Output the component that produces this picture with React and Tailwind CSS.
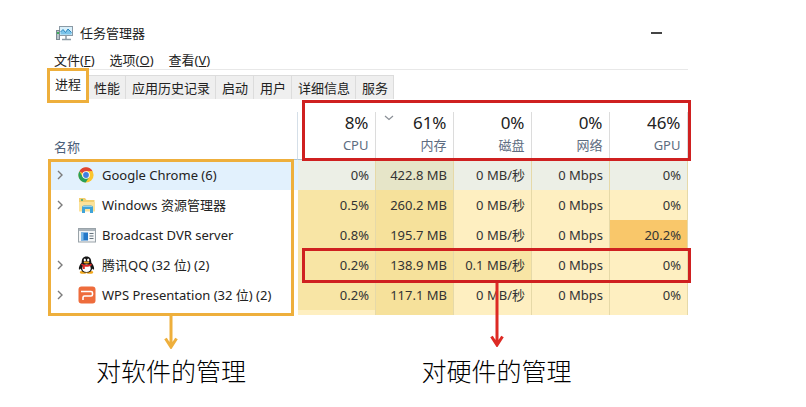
import React from "react";

const menus = [
  { label: "文件", hotkey: "F" },
  { label: "选项", hotkey: "O" },
  { label: "查看", hotkey: "V" },
];

const tabs = ["性能", "应用历史记录", "启动", "用户", "详细信息", "服务"];

const columns = [
  { label: "CPU", total: "8%" },
  { label: "内存", total: "61%", sorted: true },
  { label: "磁盘", total: "0%" },
  { label: "网络", total: "0%" },
  { label: "GPU", total: "46%" },
];

// Heat levels of the usage cells, from idle to busy
const heat = {
  hover: "bg-[#ecefe6]",
  hoverWarm: "bg-[#e6e5c8]",
  low: "bg-[#feefc1]",
  mid: "bg-[#f8e5a5]",
  warm: "bg-[#f6e19b]",
  hot: "bg-[#f9c76a]",
};

const rows = [
  {
    name: "Google Chrome (6)",
    icon: ChromeIcon,
    expandable: true,
    hovered: true,
    cells: [["0%", "hover"], ["422.8 MB", "hoverWarm"], ["0 MB/秒", "hover"], ["0 Mbps", "hover"], ["0%", "hover"]],
  },
  {
    name: "Windows 资源管理器",
    icon: FolderIcon,
    expandable: true,
    cells: [["0.5%", "mid"], ["260.2 MB", "warm"], ["0 MB/秒", "low"], ["0 Mbps", "low"], ["0%", "low"]],
  },
  {
    name: "Broadcast DVR server",
    icon: WindowIcon,
    expandable: false,
    cells: [["0.8%", "mid"], ["195.7 MB", "warm"], ["0 MB/秒", "low"], ["0 Mbps", "low"], ["20.2%", "hot"]],
  },
  {
    name: "腾讯QQ (32 位) (2)",
    icon: PenguinIcon,
    expandable: true,
    cells: [["0.2%", "mid"], ["138.9 MB", "warm"], ["0.1 MB/秒", "mid"], ["0 Mbps", "low"], ["0%", "low"]],
  },
  {
    name: "WPS Presentation (32 位) (2)",
    icon: WpsIcon,
    expandable: true,
    cells: [["0.2%", "mid"], ["117.1 MB", "warm"], ["0 MB/秒", "low"], ["0 Mbps", "low"], ["0%", "low"]],
  },
];

const nextRow = ["low", "warm", "low", "low", "low"];

function MonitorIcon() {
  return (
    <svg className="h-4 w-[18px]" viewBox="0 0 18 16" aria-hidden="true">
      <rect x="3.5" y="1.5" width="13" height="9" fill="#d9f0fb" stroke="#8b9aa5" />
      <path d="M4.5 7 L7 4.5 L9.5 7.5 L12 4 L15.5 7.5 V9.5 H4.5 Z" fill="#7cc4ea" />
      <path d="M4.5 7 L7 4.5 L9.5 7.5 L12 4 L15.5 7.5" fill="none" stroke="#2b86bd" />
      <path d="M10 11 V14 M6 14.5 H15" stroke="#8b9aa5" strokeWidth="1.5" />
      <rect x="0.5" y="5.5" width="3" height="9" fill="#b9c4cb" stroke="#7c8a94" />
      <rect x="1" y="7" width="2" height="2" fill="#3fae5b" />
    </svg>
  );
}

function ChromeIcon() {
  return (
    <svg className="size-4" viewBox="0 0 16 16" aria-hidden="true">
      <circle cx="8" cy="8" r="7.6" fill="#fbc62f" />
      <path d="M8 8 L1.4 4.2 A7.6 7.6 0 0 1 14.6 4.2 H8 Z" fill="#df4535" />
      <path d="M1.4 4.2 A7.6 7.6 0 0 0 7.7 15.6 L11.2 9.9 L8 8 L4.7 9.9 Z" fill="#27a05a" />
      <path d="M8 4.2 H14.6 L11 9 Z" fill="#fbc62f" />
      <circle cx="8" cy="8" r="3.8" fill="#fff" />
      <circle cx="8" cy="8" r="2.9" fill="#3f7fe0" />
    </svg>
  );
}

function FolderIcon() {
  return (
    <svg className="size-[18px]" viewBox="0 0 18 18" aria-hidden="true">
      <path d="M1 2 H7 L8.5 4 H16.5 V15 H1 Z" fill="#f3cf70" />
      <path d="M3 3 H5 V5 H3 Z" fill="#68ae72" />
      <path d="M1 6 H17 V15.5 H1 Z" fill="#fbe29a" />
      <path d="M4 17 V11.5 Q4 9.5 6 9.5 H13 Q15 9.5 15 11.5 V17 H12 V13 H7 V17 Z" fill="#3fa3d8" />
      <path d="M5 10.5 H14" stroke="#8fd0ee" />
    </svg>
  );
}

function WindowIcon() {
  return (
    <svg className="h-[15px] w-[18px]" viewBox="0 0 18 15" aria-hidden="true">
      <rect x="0.5" y="0.5" width="17" height="13.5" fill="#f4f6f7" stroke="#9aa3a9" />
      <rect x="1" y="1" width="16" height="2" fill="#aab4bb" />
      <rect x="3" y="4.5" width="7" height="8" fill="#2478c8" />
      <rect x="3" y="4.5" width="2.5" height="8" fill="#7ab8e8" />
      <path d="M11.5 5.5 H15.5 M11.5 8 H15.5 M11.5 10.5 H15.5" stroke="#67757e" />
    </svg>
  );
}

function PenguinIcon() {
  return (
    <svg className="h-[18px] w-[17px]" viewBox="0 0 17 18" aria-hidden="true">
      <ellipse cx="5.2" cy="16.3" rx="3.4" ry="1.5" fill="#f2a81d" />
      <ellipse cx="11.8" cy="16.3" rx="3.4" ry="1.5" fill="#f2a81d" />
      <path d="M8.5 0.5 C5 0.5 3.6 3 3.7 6.6 C2 8.6 0.6 11 0.9 13.2 C1.2 14.2 2.3 13.2 2.8 12.4 C3.2 15.2 5.4 16.6 8.5 16.6 C11.6 16.6 13.8 15.2 14.2 12.4 C14.7 13.2 15.8 14.2 16.1 13.2 C16.4 11 15 8.6 13.3 6.6 C13.4 3 12 0.5 8.5 0.5 Z" fill="#151515" />
      <ellipse cx="8.5" cy="12.3" rx="4.2" ry="3.8" fill="#fff" />
      <ellipse cx="6.8" cy="4" rx="1.1" ry="1.5" fill="#fff" />
      <ellipse cx="10.2" cy="4" rx="1.1" ry="1.5" fill="#fff" />
      <ellipse cx="8.5" cy="6.6" rx="3" ry="1" fill="#f2a81d" />
      <path d="M3.6 7.6 C6 9.4 11 9.4 13.4 7.6 L13.8 9.2 C11 11 8 11 6.8 10.6 V13 H4.8 V9.8 L3.2 9 Z" fill="#df2c27" />
    </svg>
  );
}

function WpsIcon() {
  return (
    <svg className="size-[18px]" viewBox="0 0 18 18" aria-hidden="true">
      <rect x="0.5" y="0.5" width="17" height="17" rx="3" fill="#ee6c3c" />
      <path d="M3 5.5 H13 Q14.5 5.5 14.5 7 V8.5 Q14.5 10 13 10 H6.5 Q5 10 5 11.5 V14" fill="none" stroke="#fff" strokeWidth="1.6" />
    </svg>
  );
}

function Chevron() {
  return (
    <svg className="h-2.5 w-2" viewBox="0 0 8 10" aria-hidden="true">
      <path d="M2 1 L6 5 L2 9" fill="none" stroke="#7b7b7b" strokeWidth="1.4" />
    </svg>
  );
}

function SortMark() {
  return (
    <svg className="mt-1 h-1.5 w-2.5" viewBox="0 0 10 6" aria-hidden="true">
      <path d="M1 1 L5 4.5 L9 1" fill="none" stroke="#8a8f96" strokeWidth="1.2" />
    </svg>
  );
}

function ProcessTable() {
  return (
    <table className="w-full table-fixed border-collapse text-[13px] leading-4">
      <colgroup>
        <col />
        {columns.map((c) => (
          <col key={c.label} className="w-[78px]" />
        ))}
      </colgroup>
      <thead>
        <tr className="h-[61px] align-bottom">
          <th scope="col" className="p-0 text-left font-normal text-[#4c607a]">
            <div className="flex h-12 items-end border-r border-b border-r-[#d5dfe8] border-b-[#a9c3d6] pb-1 pl-1.5">
              名称
            </div>
          </th>
          {columns.map((c) => (
            <th key={c.label} scope="col" className="p-0 font-normal">
              <div className="flex h-12 flex-col justify-end border-r border-b border-r-[#dcdcdc] border-b-[#a9c3d6] pr-1.5 pb-1 pl-2">
                <div className="flex justify-between text-[17px] leading-6 text-[#222]">
                  {c.sorted ? <SortMark /> : <span />}
                  <span>{c.total}</span>
                </div>
                <div className="text-right leading-5 text-[#5d6c80]">{c.label}</div>
              </div>
            </th>
          ))}
        </tr>
      </thead>
      <tbody>
        {rows.map((row) => (
          <tr key={row.name} className="h-[30px]">
            <th scope="row" className={row.hovered ? "bg-[#e2f1fd] p-0 font-normal" : "p-0 font-normal"}>
              <div className="flex items-center pl-2 whitespace-nowrap text-[#222]">
                <span className="flex w-[22px]">
                  {row.expandable && (
                    <button type="button" aria-label={"展开 " + row.name}>
                      <Chevron />
                    </button>
                  )}
                </span>
                <span className="flex w-6">
                  <row.icon />
                </span>
                {row.name}
              </div>
            </th>
            {row.cells.map(([value, level], i) => (
              <td
                key={columns[i].label}
                className={"border-r border-[#e6d9a8] p-0 pr-1.5 text-right whitespace-nowrap text-[#333] " + heat[level]}
              >
                {value}
              </td>
            ))}
          </tr>
        ))}
        <tr className="h-[5px]" aria-hidden="true">
          <td className="p-0" />
          {nextRow.map((level, i) => (
            <td key={columns[i].label} className={"border-r border-[#e6d9a8] p-0 " + heat[level]} />
          ))}
        </tr>
      </tbody>
    </table>
  );
}

export default function App() {
  return (
    <main className="bg-white pt-[22px] pr-[118px] pb-5 pl-12 font-['Noto_Sans','Noto_Sans_CJK_SC',sans-serif] text-[13px] leading-4 text-[#222]">
      <header className="flex h-[22px] items-center gap-1.5 pr-[26px] pl-2">
        <MonitorIcon />
        <h1 className="flex-1">任务管理器</h1>
        <button type="button" aria-label="最小化" className="flex h-4 items-center">
          <span className="h-0.5 w-[11px] bg-[#444]" />
        </button>
      </header>

      <nav className="flex h-[26px] items-end gap-[15px] border-b border-[#e8e8e8] pb-[1px] pl-1.5">
        {menus.map((m) => (
          <button key={m.hotkey} type="button">
            {m.label}(<u>{m.hotkey}</u>)
          </button>
        ))}
      </nav>

      <div role="tablist" className="flex h-[29px] items-end">
        <button
          type="button"
          role="tab"
          aria-selected="true"
          className="relative h-[27px] w-10 shrink-0 pb-1 text-center"
        >
          进程
          <span className="absolute -inset-x-px -top-1 -bottom-1 border-3 border-[#eeaf3c]" />
        </button>
        {tabs.map((t) => (
          <button
            key={t}
            type="button"
            role="tab"
            aria-selected="false"
            className="h-6 border-t border-r border-[#dcdcdc] bg-[#efefef] pr-[5px] pl-1.5 whitespace-nowrap"
          >
            {t}
          </button>
        ))}
      </div>

      <section className="relative">
        <ProcessTable />
        <div className="pointer-events-none absolute top-[60px] right-[394px] -bottom-px left-0 border-3 border-[#eeaf3c]" />
        <div className="pointer-events-none absolute top-px -right-[3px] h-[61px] w-[389px] border-3 border-[#cf2020]" />
        <div className="pointer-events-none absolute top-[149px] -right-[3px] h-[35px] w-[389px] border-3 border-[#cf2020]" />
      </section>

      <section className="-mr-[3px] grid grid-cols-[1fr_389px] gap-2 font-light text-black">
        <figure className="flex flex-col items-center">
          <svg className="h-[34px] w-4" viewBox="0 0 16 34" aria-hidden="true">
            <path d="M8 0 V31 M2.5 23.5 L8 32 L13.5 23.5" fill="none" stroke="#eeaf3c" strokeWidth="3" />
          </svg>
          <figcaption className="mt-1.5 text-[25px] leading-8">对软件的管理</figcaption>
        </figure>
        <figure className="relative flex flex-col items-center pt-[34px]">
          <svg className="absolute -top-8 h-16 w-4" viewBox="0 0 16 64" aria-hidden="true">
            <path d="M8 0 V61 M2.5 53.5 L8 62 L13.5 53.5" fill="none" stroke="#dd2a24" strokeWidth="3" />
          </svg>
          <figcaption className="mt-1.5 text-[25px] leading-8">对硬件的管理</figcaption>
        </figure>
      </section>
    </main>
  );
}
